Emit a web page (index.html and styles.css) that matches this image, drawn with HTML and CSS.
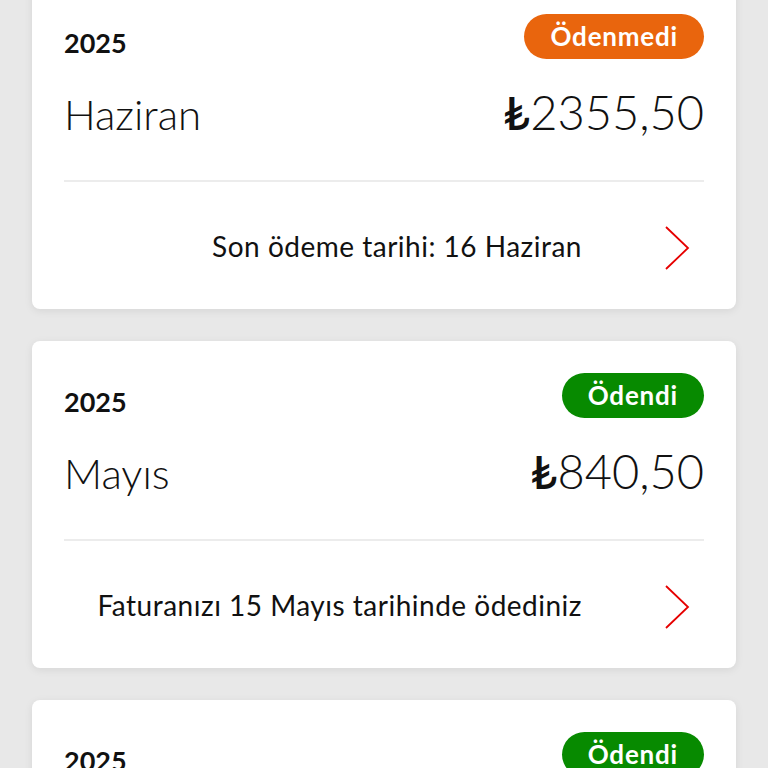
FILE: index.html
```html
<!DOCTYPE html>
<html lang="tr">
<head>
    <meta charset="utf-8">
    <title>Faturalarım</title>
    <link rel="stylesheet" href="styles.css">
</head>
<body>
    <!-- Fatura listesi -->
    <main class="bills">

        <section class="bill">
            <div class="bill-head">
                <span class="bill-year">2025</span>
                <span class="badge badge-unpaid">Ödenmedi</span>
            </div>
            <div class="bill-main">
                <span class="bill-month">Haziran</span>
                <span class="bill-amount"><span class="currency">₺</span>2355,50</span>
            </div>
            <div class="bill-foot">
                <span class="bill-note">Son ödeme tarihi: 16 Haziran</span>
                <svg class="chevron" viewBox="0 0 26 46" width="26" height="46">
                    <path d="M2 2 L24 23 L2 44" fill="none" stroke="#e60000" stroke-width="1.8"/>
                </svg>
            </div>
        </section>

        <section class="bill">
            <div class="bill-head">
                <span class="bill-year">2025</span>
                <span class="badge badge-paid">Ödendi</span>
            </div>
            <div class="bill-main">
                <span class="bill-month">Mayıs</span>
                <span class="bill-amount"><span class="currency">₺</span>840,50</span>
            </div>
            <div class="bill-foot">
                <span class="bill-note">Faturanızı 15 Mayıs tarihinde ödediniz</span>
                <svg class="chevron" viewBox="0 0 26 46" width="26" height="46">
                    <path d="M2 2 L24 23 L2 44" fill="none" stroke="#e60000" stroke-width="1.8"/>
                </svg>
            </div>
        </section>

        <section class="bill">
            <div class="bill-head">
                <span class="bill-year">2025</span>
                <span class="badge badge-paid">Ödendi</span>
            </div>
            <div class="bill-main">
                <span class="bill-month">Nisan</span>
                <span class="bill-amount"><span class="currency">₺</span>812,40</span>
            </div>
            <div class="bill-foot">
                <span class="bill-note">Faturanızı 14 Nisan tarihinde ödediniz</span>
                <svg class="chevron" viewBox="0 0 26 46" width="26" height="46">
                    <path d="M2 2 L24 23 L2 44" fill="none" stroke="#e60000" stroke-width="1.8"/>
                </svg>
            </div>
        </section>

    </main>
</body>
</html>
```

FILE: styles.css
```css
body {
    margin: 0;
    height: 768px;
    overflow: hidden;
    font-family: Lato, "Open Sans", sans-serif;
    color: #111;
    background-color: #e8e8e8;
}

/* list is scrolled a little, first card starts above the fold */
.bills {
    display: flex;
    flex-direction: column;
    gap: 32px;
    padding: 0 32px;
    margin-top: -18px;
}

.bill {
    background-color: #fff;
    border-radius: 8px;
    box-shadow: 0 2px 8px rgba(0, 0, 0, 0.08);
    padding: 32px 32px 0;
}

.bill-head {
    display: flex;
    justify-content: space-between;
    align-items: center;
    height: 45px;
}

.bill-year {
    font-size: 27px;
    font-weight: 700;
    margin-top: 12px;
}

.badge {
    height: 45px;
    line-height: 45px;
    padding: 0 26px;
    border-radius: 23px;
    color: #fff;
    font-size: 26px;
    font-weight: 700;
    letter-spacing: 0.8px;
}

.badge-unpaid {
    background-color: #e9650d;
}

.badge-paid {
    background-color: #078a00;
}

.bill-main {
    display: flex;
    justify-content: space-between;
    align-items: baseline;
    margin-top: 28px;
    padding-bottom: 41px;
    border-bottom: 2px solid #ececec;
    font-weight: 300;
    line-height: 50px;
}

.bill-month {
    font-size: 42px;
}

.bill-amount {
    font-size: 47px;
}

.currency {
    font-weight: 500;
}

.bill-foot {
    display: flex;
    justify-content: flex-end;
    align-items: center;
    gap: 82px;
    height: 127px;
    padding-right: 14px;
}

.bill-note {
    font-size: 28px;
    letter-spacing: 0.5px;
    text-align: right;
}

.chevron {
    display: block;
    margin-top: 4px;
}
```
